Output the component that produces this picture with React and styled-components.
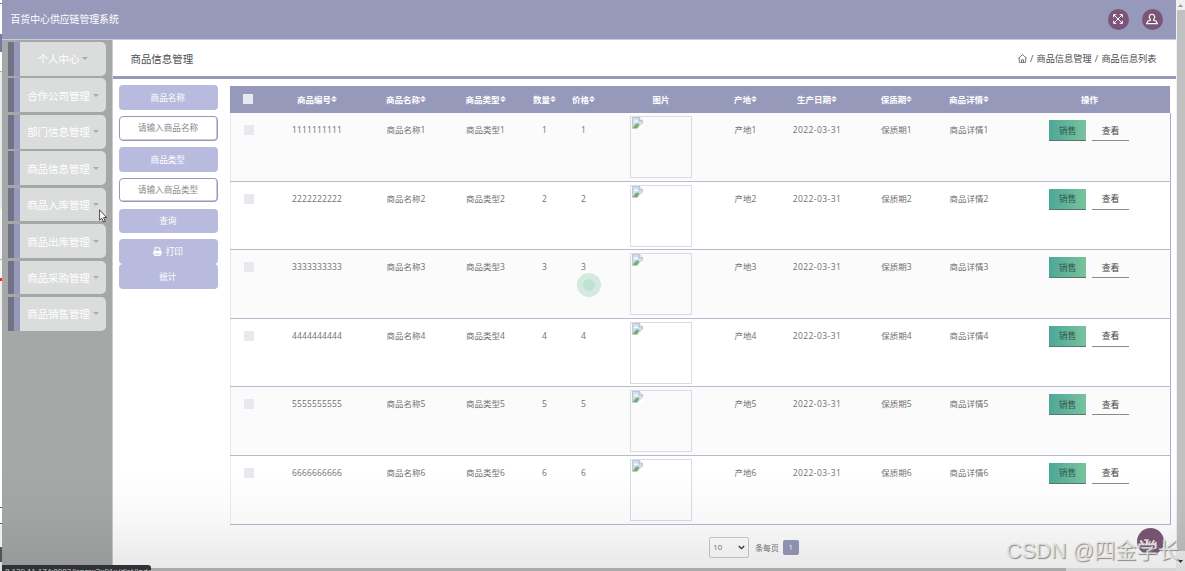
import React from "react";
import styled, { createGlobalStyle } from "styled-components";

const Global = createGlobalStyle`
  * { box-sizing: border-box; }
  body { margin: 0; overflow: hidden; font-family: "Open Sans", "Noto Sans CJK SC", sans-serif; color: #707070; }
`;

const Screen = styled.div`
  position: relative;
  display: grid;
  grid-template-columns: 2px 1174px 9px;
  width: 1185px;
  height: 571px;
  overflow: hidden;
  background: #fff;
`;
const Edge = styled.div`
  background: linear-gradient(#fff 0 3px, #777a99 3px 4px, #fff 4px 34px, #7779a0 34px 52px, #fff 52px 71px, #aaa 71px 72px, #e4ebe8 72px 209px, #f5f5f5 209px 259px, #aaa 259px 260px, #f5f5f5 260px 278px, #f22 278px 281px, #eee 281px 320px, #fff 320px 507px, #555 507px 508px, #fff 508px 523px, #555 523px 524px, #eee 524px 547px, #555 547px 562px, #ddd 562px);
`;
const Main = styled.div`
  display: flex;
  flex-direction: column;
  min-width: 0;
  height: 571px;
`;
const Header = styled.header`
  display: flex;
  flex: none;
  align-items: center;
  justify-content: space-between;
  height: 40px;
  padding: 0 13.5px 1px 8.5px;
  background: #9799bb;
  border-bottom: 1px solid #c9cae0;
  color: #fff;
  font-size: 9.85px;
`;
const HeaderTools = styled.div`
  display: flex;
  gap: 13px;
`;
const RoundButton = styled.button`
  display: grid;
  place-items: center;
  width: 21px;
  height: 21px;
  padding: 0;
  border: 0;
  border-radius: 50%;
  background: #7a5578;
`;
const Body = styled.div`
  display: flex;
  flex: 1;
  min-height: 0;
`;
const Sidebar = styled.nav`
  display: flex;
  flex: none;
  flex-direction: column;
  gap: 2.75px;
  width: 111px;
  padding: 2px 6px;
  background: #a6a8a7;
  border-right: 1px solid #ccc;
`;
const MenuItem = styled.a`
  display: flex;
  align-items: center;
  justify-content: center;
  gap: 3px;
  height: 33.7px;
  border-left: 6px solid #727286;
  border-radius: 0 5px 5px 0;
  background: linear-gradient(90deg, #9799bb 6px, #dbdddc 6px);
  padding-left: 6px;
  color: #fff;
  font-size: 10.45px;
  white-space: nowrap;
`;
const Caret = styled.i`
  border: 3px solid transparent;
  border-top-color: #a9acab;
  border-bottom: 0;
`;
const Content = styled.main`
  flex: 1;
  min-width: 0;
`;
const TitleBar = styled.div`
  display: flex;
  align-items: center;
  justify-content: space-between;
  height: 39px;
  padding: 0 19.5px 0 17.5px;
  border-bottom: 3px solid #9799bb;
`;
const Title = styled.h1`
  margin: 0;
  color: #4c4c4c;
  font-size: 10.45px;
  font-weight: 400;
`;
const Crumbs = styled.div`
  display: flex;
  align-items: center;
  gap: 3.2px;
  color: #4c4c4c;
  font-size: 9.2px;
`;
const Panels = styled.div`
  display: flex;
  gap: 12px;
  padding: 6px 6px 0;
`;
const Filters = styled.div`
  display: flex;
  flex: none;
  flex-direction: column;
  gap: 6.1px;
  width: 99px;
`;
const FilterButton = styled.button`
  display: flex;
  align-items: center;
  justify-content: center;
  gap: 4px;
  width: 100%;
  height: 24.8px;
  padding: 0 1.5px 0 0;
  border: 0;
  border-radius: 4px;
  background: #b8bbdd;
  color: #fff;
  font: 8.6px "Open Sans", "Noto Sans CJK SC", sans-serif;
`;
const FilterInput = styled.input`
  width: 100%;
  height: 24.8px;
  padding: 0 1px 0 0;
  border: 1.5px solid #9799bb;
  border-radius: 4px;
  background: #fff;
  box-shadow: inset -0.5px -0.5px #9799bb;
  text-align: center;
  font: 8.6px "Open Sans", "Noto Sans CJK SC", sans-serif;
  &::placeholder { color: #8a8a8a; opacity: 1; }
`;
const Listing = styled.div`
  width: 941px;
  padding-top: 1px;
`;
const Table = styled.div`
  box-shadow: inset 1px 0 #ececf5;
`;
const Row = styled.div`
  display: grid;
  grid-template-columns: 36px 102px 76px 83px 35px 43px 112px 57px 86px 73px 72px 165px;
  height: 68.6px;
  border-right: 1px solid #a9abca;
  border-bottom: 1px solid #b9bad2;
  background: ${(p) => (p.$odd ? "rgba(0,0,0,.016)" : "transparent")};
`;
const HeadRow = styled(Row)`
  width: 940px;
  height: 27px;
  border: 0;
  background: #9799bb;
`;
const Cell = styled.div`
  padding-top: 11px;
  text-align: center;
  font-size: 8.5px;
  line-height: 12px;
  letter-spacing: ${(p) => p.$track || 0}px;
  white-space: nowrap;
`;
const HeadCell = styled.div`
  display: flex;
  align-items: center;
  justify-content: center;
  padding: 0 0 1px ${(p) => p.$shift || 0}px;
  color: #fff;
  font-size: 8.5px;
  font-weight: 700;
  white-space: nowrap;
`;
const Check = styled.span`
  display: inline-block;
  width: 10px;
  height: 10px;
  margin: 1px 0 0 2px;
  background: #e8e9ee;
`;
const HeadCheck = styled(Check)`
  margin: 0;
`;
const Picture = styled.div`
  width: 62px;
  height: 62px;
  margin: 3px auto 0;
  padding-left: 1px;
  border: 1px solid #dcdcde;
  svg { display: block; }
`;
const Actions = styled.div`
  display: flex;
  justify-content: center;
  gap: 6px;
  padding: 7px 0 0 3px;
`;
const ActionButton = styled.button`
  width: 37px;
  height: 21px;
  padding: 0;
  border: 0;
  border-bottom: 1px solid ${(p) => (p.$sell ? "#58786f" : "#8a8a8a")};
  background: ${(p) => (p.$sell ? "linear-gradient(90deg, #4da797, #79c29d)" : "transparent")};
  color: ${(p) => (p.$sell ? "#36584f" : "#444")};
  font: 8.8px "Open Sans", "Noto Sans CJK SC", sans-serif;
`;
const Pager = styled.div`
  display: flex;
  align-items: center;
  justify-content: center;
  gap: 4px;
  height: 21px;
  margin: 12px 0 0 107px;
  font-size: 7.8px;
`;
const PageSize = styled.div`
  display: flex;
  align-items: center;
  justify-content: space-between;
  width: 40px;
  height: 21px;
  margin-right: 2px;
  padding: 0 3px;
  border: 1px solid #ccc;
  border-radius: 2px;
`;
const PageBadge = styled.span`
  display: grid;
  place-items: center;
  width: 16px;
  height: 15px;
  border-radius: 2px;
  background: #9799bb;
  color: #fff;
`;
const Scrollbar = styled.div`
  display: flex;
  flex-direction: column;
  align-items: center;
  background: #f0f0f0;
`;
const Thumb = styled.div`
  width: 8px;
  height: 541px;
  margin-left: 1px;
  background: #c1c1c1;
`;
const Arrow = styled.div`
  display: grid;
  place-items: center;
  height: ${(p) => p.$h}px;
`;
const Fade = styled.div`
  position: absolute;
  inset: 470px 0 0 2px;
  background: linear-gradient(transparent, rgba(0,0,0,.025) 45%, rgba(0,0,0,.09));
`;
const HScroll = styled.div`
  position: absolute;
  left: 2px;
  bottom: 0;
  width: 1174px;
  height: 3px;
  background: linear-gradient(90deg, #aaa 1064px, #d4d4d4 1064px);
`;
const StatusBubble = styled.div`
  position: absolute;
  left: 2px;
  bottom: 0;
  width: 149px;
  height: 6px;
  padding-left: 3px;
  overflow: hidden;
  border-radius: 0 3px 0 0;
  background: #303236;
  color: #ccc;
  font-size: 8px;
  line-height: 11px;
  letter-spacing: -0.1px;
  white-space: nowrap;
`;
const Ripple = styled.div`
  position: absolute;
  left: 577px;
  top: 273px;
  width: 24px;
  height: 24px;
  border: 6px solid #d3eadf;
  border-radius: 50%;
  background: #c2e1d3;
`;
const Badge = styled.div`
  position: absolute;
  left: 1136.5px;
  top: 528px;
  width: 27px;
  height: 27px;
  border-radius: 50%;
  background: #755470;
`;
const Watermark = styled.div`
  position: absolute;
  left: 1006px;
  top: 536px;
  color: rgba(232,232,232,.85);
  font: 21.3px/30px "Liberation Sans", "Noto Sans CJK SC", sans-serif;
  text-shadow: 1px 1px 1px #888;
  white-space: nowrap;
`;
const Cursor = styled.svg`
  position: absolute;
  left: 99px;
  top: 209px;
`;

const SortIcon = () => (
  <svg width="6" height="8" viewBox="0 0 6 8" fill="#fff"><path d="M0 3.600L3 1l3 2.600zM0 4.500h6L3 7.100z" /></svg>
);
const BrokenImage = () => (
  <svg width="11" height="12" viewBox="0 0 11 12">
    <path d="M.5.5h7l3 3v8H.5z" fill="#d0def5" stroke="#b9bdc5" strokeWidth=".8" />
    <path d="M7.300.5v3.200h3.200" fill="#fff" stroke="#aaa" strokeWidth=".8" />
    <path d="M2 5q0-1.500 1.500-1.500Q5 2.500 6 5z" fill="#fff" />
    <path d="M1 11q2.500-6 6.500-4L5.500 11z" fill="#79b069" />
    <path d="M5 12L11 6.300V12z" fill="#fff" />
  </svg>
);
const ExpandIcon = () => (
  <svg width="10" height="10" viewBox="0 0 10 10" fill="none" stroke="#fff" strokeWidth="1">
    <path d="M1 1l8 8M9 1L1 9M.6 3.300V.6h2.700M6.700.6h2.700v2.700M9.400 6.700v2.700H6.700M3.300 9.400H.6V6.700" />
  </svg>
);
const UserIcon = () => (
  <svg width="12" height="12" viewBox="0 0 12 12" fill="none" stroke="#fff" strokeWidth="1.100">
    <path d="M4.300 6.300C2.700 4.600 3 1.200 6 1.200s3.300 3.400 1.700 5.100v1l2.600 1 1 2.300H.7l1-2.300 2.600-1z" />
  </svg>
);
const HomeIcon = () => (
  <svg width="9" height="9" viewBox="0 0 9 9" fill="none" stroke="#555" strokeWidth=".8">
    <path d="M.4 4.300L4.500.6l4.100 3.700M1.300 3.800v4.600h6.400V3.800M3.500 8.400V5.800h2v2.600" />
  </svg>
);
const PrintIcon = () => (
  <svg width="9" height="9" viewBox="0 0 9 9">
    <path d="M2 4V.8h4l1 1V4M2 6.200h5v2.200H2z" fill="none" stroke="#fff" strokeWidth="1.100" />
    <path d="M.3 4.700Q.3 3.700 1.300 3.700h6.400q1 0 1 1v2.800H7.400V5.900H1.600v1.600H.3z" fill="#fff" />
  </svg>
);

const menu = ["个人中心", "合作公司管理", "部门信息管理", "商品信息管理", "商品入库管理", "商品出库管理", "商品采购管理", "商品销售管理"];
const columns = ["商品编号", "商品名称", "商品类型", "数量", "价格", "图片", "产地", "生产日期", "保质期", "商品详情", "操作"];
const rows = [1, 2, 3, 4, 5, 6];

export default function App() {
  return (
    <Screen>
      <Global />
      <Edge />
      <Main>
        <Header>
          <span>百货中心供应链管理系统</span>
          <HeaderTools>
            <RoundButton><ExpandIcon /></RoundButton>
            <RoundButton><UserIcon /></RoundButton>
          </HeaderTools>
        </Header>
        <Body>
          <Sidebar>
            {menu.map((m) => <MenuItem key={m}>{m}<Caret /></MenuItem>)}
          </Sidebar>
          <Content>
            <TitleBar>
              <Title>商品信息管理</Title>
              <Crumbs><HomeIcon /><span>/</span><span>商品信息管理</span><span>/</span><span>商品信息列表</span></Crumbs>
            </TitleBar>
            <Panels>
              <Filters>
                <FilterButton>商品名称</FilterButton>
                <FilterInput placeholder="请输入商品名称" />
                <FilterButton>商品类型</FilterButton>
                <FilterInput placeholder="请输入商品类型" />
                <FilterButton>查询</FilterButton>
                <div>
                  <FilterButton><PrintIcon />打印</FilterButton>
                  <FilterButton>统计</FilterButton>
                </div>
              </Filters>
              <Listing>
                <Table>
                  <HeadRow>
                    <HeadCell><HeadCheck /></HeadCell>
                    {columns.map((c) => (
                      <HeadCell key={c} $shift={c === "操作" ? 4 : 0}>{c}{c !== "图片" && c !== "操作" && <SortIcon />}</HeadCell>
                    ))}
                  </HeadRow>
                  {rows.map((n) => (
                    <Row key={n} $odd={n % 2 === 1}>
                      <Cell><Check /></Cell>
                      <Cell $track={0.15}>{String(n).repeat(10)}</Cell>
                      <Cell>商品名称{n}</Cell>
                      <Cell>商品类型{n}</Cell>
                      <Cell>{n}</Cell>
                      <Cell>{n}</Cell>
                      <Picture><BrokenImage /></Picture>
                      <Cell>产地{n}</Cell>
                      <Cell $track={0.4}>2022-03-31</Cell>
                      <Cell>保质期{n}</Cell>
                      <Cell>商品详情{n}</Cell>
                      <Actions>
                        <ActionButton $sell>销售</ActionButton>
                        <ActionButton>查看</ActionButton>
                      </Actions>
                    </Row>
                  ))}
                </Table>
                <Pager>
                  <PageSize>
                    <span>10</span>
                    <svg width="7" height="5" viewBox="0 0 7 5" fill="none" stroke="#333" strokeWidth="1.300"><path d="M.8 1l2.700 2.700L6.200 1" /></svg>
                  </PageSize>
                  <span>条每页</span>
                  <PageBadge>1</PageBadge>
                </Pager>
              </Listing>
            </Panels>
          </Content>
        </Body>
      </Main>
      <Scrollbar>
        <Arrow $h={10}><svg width="5" height="3" viewBox="0 0 5 3"><path d="M0 3L2.500 0 5 3z" fill="#999" /></svg></Arrow>
        <Thumb />
        <Arrow $h={20}><svg width="5" height="3" viewBox="0 0 5 3"><path d="M0 0h5L2.500 3z" fill="#333" /></svg></Arrow>
      </Scrollbar>
      <Ripple />
      <Fade />
      <HScroll />
      <StatusBubble>8.129.11.174:8082/jspmx2x91x/dist/index#</StatusBubble>
      <Badge>
        <svg width="27" height="27" viewBox="0 0 27 27" fill="none" stroke="#fff" strokeWidth="1">
          <path d="M3 13l4 5M7 12h5M9.500 12v6M13 13l-1 5 3-2v3M17 14q-3 0-1 3l3-3v6l-3 1" />
        </svg>
      </Badge>
      <Watermark>CSDN @四金学长</Watermark>
      <Cursor width="9" height="14" viewBox="0 0 9 14"><path d="M.6.8v10.400l2.300-2 1.700 3.800 1.700-.8-1.700-3.600h3z" fill="#fff" stroke="#222" strokeWidth=".8" /></Cursor>
    </Screen>
  );
}
